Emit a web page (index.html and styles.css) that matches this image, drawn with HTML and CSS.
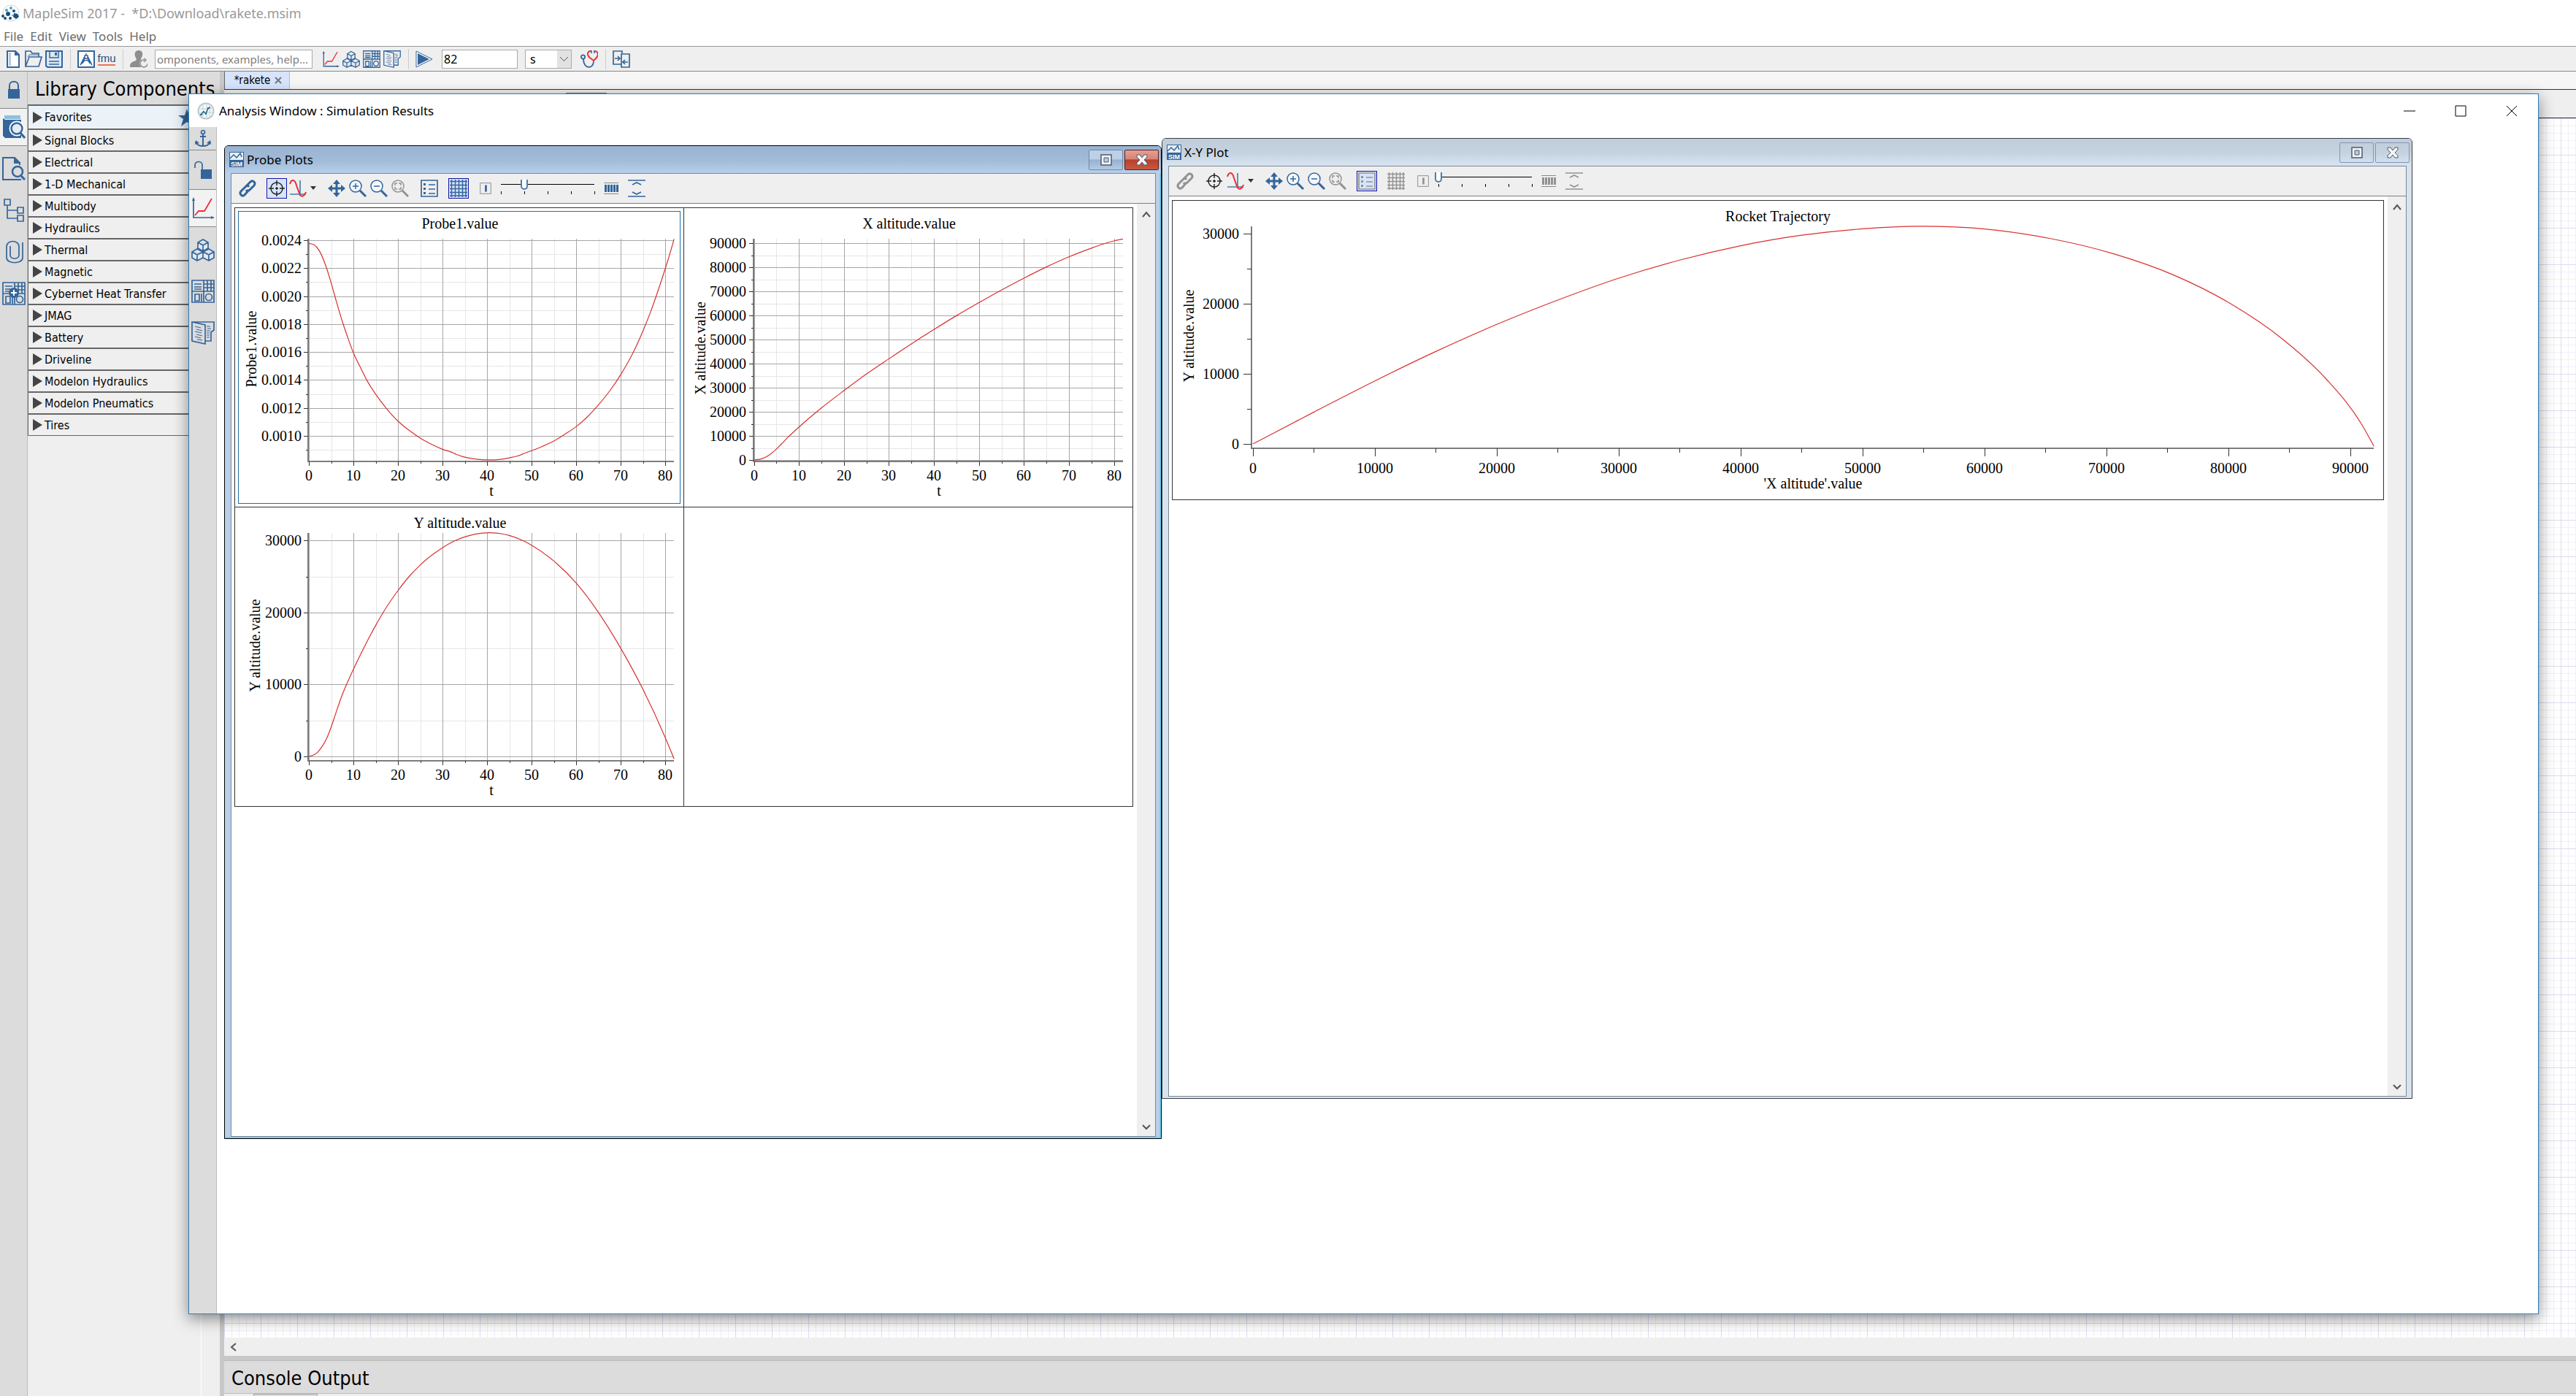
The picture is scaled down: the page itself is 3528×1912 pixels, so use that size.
FILE: index.html
```html
<!DOCTYPE html>
<html lang="en">
<head>
  <meta charset="UTF-8" />
  <title>MapleSim 2017 - *D:\Download\rakete.msim</title>
  <link rel="stylesheet" href="styles.css">
</head>
<body>
  <!-- icon sprite -->
  <svg class="sprite" aria-hidden="true">
    <symbol id="i-app" viewBox="0 0 24 24">
      <circle cx="13" cy="12" r="11" fill="#fff" stroke="#ccd3d8"/>
      <g fill="#15527c"><path d="M17 12l5 1 2 4-4 3-4-3z"/><circle cx="9" cy="13" r="3"/><circle cx="5" cy="19" r="2"/><circle cx="12" cy="19" r="2"/><circle cx="2" cy="16" r="2"/><circle cx="17" cy="9" r="2"/></g>
      <g fill="#4aa0cc"><circle cx="7" cy="8" r="2"/><circle cx="13" cy="5" r="2"/><circle cx="15" cy="15" r="1"/></g>
    </symbol>
    <symbol id="i-analysis" viewBox="0 0 24 24">
      <circle cx="12" cy="12" r="10.5" fill="#f4f7f8" stroke="#c2c6c8" stroke-width="2"/>
      <path d="M8 4v16M13 3v18M17 5v14M4 9h16M3 14h18" stroke="#b5d3df" fill="none"/>
      <path d="M5 17l4-4 3 3 3-8 3-1" stroke="#2a5f80" stroke-width="1.500" fill="none"/>
      <path d="M4 16h3v2H4zM8 12h2v2H8zM11 15h2v2h-2zM14 7h3v2h-3z" fill="#2a6f98"/>
    </symbol>
    <symbol id="i-new" viewBox="0 0 24 24">
      <path d="M4 1h11l5 5v17H4z" fill="#fff" stroke="currentColor" stroke-width="2"/><path d="M6 3h3v18H6z" fill="#b4cbe6"/><path d="M14 1l6 6h-6z" fill="currentColor"/>
    </symbol>
    <symbol id="i-open" viewBox="0 0 24 24">
      <path d="M1 22V1h7l2 3h9v5M1 22L6 9h17l-4 13z" fill="none" stroke="currentColor" stroke-width="1.7"/><path d="M4 9l2-3h12" fill="none" stroke="currentColor"/>
    </symbol>
    <symbol id="i-save" viewBox="0 0 24 24">
      <path d="M1 1h22v22H3l-2-2z" fill="#dce8f4" stroke="currentColor" stroke-width="2"/><path d="M6 1v9h12V1M5 15h14M5 19h14" fill="none" stroke="currentColor" stroke-width="1.5"/><path d="M13 3h3v4h-3z" fill="currentColor"/>
    </symbol>
    <symbol id="i-maplet" viewBox="0 0 24 24">
      <path d="M1 1h22v22H1z" fill="#fff" stroke="currentColor" stroke-width="2"/><path d="M12 4v3M10 8L4 20l6-9M14 8l6 12-6-9M7 18c2-6 8-6 10 0M10 7h4v4h-4z" fill="none" stroke="currentColor" stroke-width="1.4"/>
    </symbol>
    <symbol id="i-user" viewBox="0 0 24 24">
      <path d="M12 0c4 0 6 3 5 7-1 3-2 4-2 6l4 2v8H0c0-6 2-7 8-9 1-1 1-2 0-4-3-5-1-10 4-10z" fill="#8e8e8e"/><circle cx="19" cy="18" r="6" fill="#efefef"/><path d="M20 13a5 5 0 1 0 4 5M19 11l3 2-3 3" fill="none" stroke="#8e8e8e" stroke-width="1.5"/>
    </symbol>
    <symbol id="i-plot" viewBox="0 0 32 32">
      <path d="M3 3v26h26" fill="none" stroke="#34659a" stroke-width="1.7"/><path d="M1 6l2-5 2 5zM27 27l5 2-5 2z" fill="#34659a"/><path d="M5 26l5-6h8L28 3" fill="none" stroke="#e8303a" stroke-width="1.8"/>
    </symbol>
    <symbol id="i-cubes" viewBox="0 0 32 32">
      <path d="M16 2l7 4v8l-7 4-7-4V6zM9 6l7 4 7-4M16 10v8M8 15l8 4v8l-8 4-7-4v-8zM1 19l7 4 8-4M8 23v8M24 15l7 4v8l-7 4-8-4v-8zM16 19l8 4 7-4M24 23v8" fill="#e3e9ef" stroke="currentColor" stroke-width="1.7"/>
    </symbol>
    <symbol id="i-panels" viewBox="0 0 32 32">
      <path d="M1 1h30v30H1zM1 16h30M17 1v30M4 6h10M4 10h10M4 13h10M22 1v15M27 1v15M17 6h14M17 11h14M5 20h6v9H5zM14 19v11" fill="none" stroke="currentColor" stroke-width="1.7"/><circle cx="24" cy="24" r="4.5" fill="none" stroke="currentColor" stroke-width="1.7"/>
    </symbol>
    <symbol id="i-docs" viewBox="0 0 32 32">
      <path d="M1 1h30v11l-4 3v12h-8V5L1 1v26l18 4v-5" fill="none" stroke="currentColor" stroke-width="1.7"/><path d="M5 7l8 2M7 11l8 2M5 14l9 2M7 18l8 2M5 21l8 2M8 25l7 1M21 7h5M22 10h5M21 13h5M21 16h4M21 19h4M21 22h4" stroke="currentColor"/>
    </symbol>
    <symbol id="i-run" viewBox="0 0 24 24">
      <path d="M1 1l22 11L1 23z" fill="#fff" stroke="currentColor"/><path d="M3 4l16 8-16 8z" fill="currentColor"/>
    </symbol>
    <symbol id="i-steth" viewBox="0 0 24 24">
      <circle cx="3.500" cy="9" r="2.600" fill="none" stroke="#34659a" stroke-width="1.8"/><path d="M4 12c0 14 14 14 14 3" fill="none" stroke="#34659a" stroke-width="1.8"/><path d="M15 1c-6-1-7 6-1 10l4 3 3-3c5-5 3-10-2-10" fill="none" stroke="#e8303a" stroke-width="2"/><path d="M15 0v4M19 0v4" stroke="#34659a" stroke-width="1.5"/>
    </symbol>
    <symbol id="i-compare" viewBox="0 0 24 24">
      <path d="M12 19H1V1h12v3M12 5h11v18H12z" fill="none" stroke="currentColor" stroke-width="1.7"/><path d="M3 11h6M7 8l3 3-3 3M21 16h-6M17 13l-3 3 3 3" fill="none" stroke="currentColor" stroke-width="1.7"/>
    </symbol>
    <symbol id="i-lock" viewBox="0 0 32 32">
      <path d="M10 16v-6c0-7 12-7 12 0v6" fill="none" stroke="currentColor" stroke-width="2"/><path d="M8 15h16v13H8z" fill="currentColor"/>
    </symbol>
    <symbol id="i-unlock" viewBox="0 0 32 32">
      <path d="M5 13V9c0-6 10-6 10 0v7" fill="none" stroke="currentColor" stroke-width="1.7"/><path d="M13 15h15v13H13z" fill="currentColor"/>
    </symbol>
    <symbol id="i-book" viewBox="0 0 32 32">
      <path d="M3 0h22v5H3z" fill="#8cc0dc"/><path d="M1 2v26l3 3h22V6H4L1 4z" fill="currentColor"/><circle cx="20" cy="18" r="8" fill="#dfe8f2" stroke="#fff" stroke-width="5"/><circle cx="20" cy="18" r="7.500" fill="#e3ebf4" stroke="currentColor" stroke-width="2.500"/><path d="M25 24l6 7" stroke="currentColor" stroke-width="3"/>
    </symbol>
    <symbol id="i-docsearch" viewBox="0 0 32 32">
      <path d="M12 31H1V1h16l7 7v3M12 31h14" fill="none" stroke="currentColor" stroke-width="2"/><path d="M16 1l8 8h-8z" fill="currentColor"/><circle cx="21" cy="20" r="7" fill="#dcdcdc" stroke="currentColor" stroke-width="2.500"/><path d="M26 26l5 5" stroke="currentColor" stroke-width="3"/>
    </symbol>
    <symbol id="i-tree" viewBox="0 0 32 32">
      <path d="M3 1h8v8H3zM21 12h8v8h-8zM21 23h8v8h-8zM7 9v18h14M7 16h14" fill="none" stroke="currentColor" stroke-width="1.7"/>
    </symbol>
    <symbol id="i-clip" viewBox="0 0 32 32">
      <path d="M28 3v21c0 9-22 9-22 0V9c0-10 17-10 17 0v11c0 7-12 7-12 0V8" fill="none" stroke="currentColor" stroke-width="1.700"/>
    </symbol>
    <symbol id="i-anchor" viewBox="0 0 32 32">
      <circle cx="16" cy="7" r="2.500" fill="none" stroke="currentColor" stroke-width="1.700"/><path d="M16 9v17M12 13h8M6 20c2 8 18 8 20 0" fill="none" stroke="currentColor" stroke-width="2"/><path d="M5 24l1-6 5 4zM27 24l-1-6-5 4z" fill="currentColor"/>
    </symbol>
    <symbol id="i-link" viewBox="0 0 24 24">
      <path d="M10 9l6-6c3-3 8 1 5 5l-6 6c-2 2-4 2-5 0M14 14l-6 7c-3 3-8-1-5-5l6-6c2-2 4-2 5 0" fill="none" stroke="currentColor" stroke-width="3"/>
    </symbol>
    <symbol id="i-cross" viewBox="0 0 24 24">
      <circle cx="12" cy="12" r="8" fill="none" stroke="#222" stroke-width="1.500"/><path d="M12 1v7M12 16v7M1 12h7M16 12h7M10 12h4M12 10v4" stroke="#222" stroke-width="1.500"/>
    </symbol>
    <symbol id="i-sine" viewBox="0 0 24 24">
      <path d="M15 1v21M1 20h22" stroke="#4a7fb0" stroke-width="1.700"/><path d="M1 6c2-7 7-7 9 2l4 11c2 6 7 4 9-2" fill="none" stroke="#e8303a" stroke-width="2"/>
    </symbol>
    <symbol id="i-move" viewBox="0 0 24 24">
      <path d="M12 3v18M3 12h18" stroke="currentColor" stroke-width="3"/><path d="M12 0l5 6H7zM12 24l5-6H7zM0 12l6-5v10zM24 12l-6-5v10z" fill="currentColor"/>
    </symbol>
    <symbol id="i-zoomin" viewBox="0 0 24 24">
      <circle cx="9" cy="9" r="8" fill="#f4f8fc" stroke="currentColor" stroke-width="1.500"/><path d="M5 9h8M9 5v8" stroke="currentColor" stroke-width="1.500"/><path d="M15 15l8 8" stroke="currentColor" stroke-width="3"/>
    </symbol>
    <symbol id="i-zoomout" viewBox="0 0 24 24">
      <circle cx="9" cy="9" r="8" fill="#f4f8fc" stroke="currentColor" stroke-width="1.500"/><path d="M5 9h8" stroke="currentColor" stroke-width="1.500"/><path d="M15 15l8 8" stroke="currentColor" stroke-width="3"/>
    </symbol>
    <symbol id="i-zoomfit" viewBox="0 0 24 24">
      <circle cx="9" cy="9" r="8" fill="none" stroke="currentColor" stroke-width="1.500"/><path d="M5 8V5h3M10 5h3v3M13 10v3h-3M8 13H5v-3" fill="none" stroke="currentColor" stroke-width="1.500"/><path d="M15 15l8 8" stroke="currentColor" stroke-width="3"/>
    </symbol>
    <symbol id="i-list" viewBox="0 0 24 24">
      <path d="M1 1h22v22H1z" fill="none" stroke="currentColor" stroke-width="1.700"/><path d="M4 5h3v3H4zM4 11h3v3H4zM4 17h3v3H4z" fill="currentColor"/><path d="M11 7h9M11 13h9M11 19h9" stroke="currentColor" stroke-width="1.500"/>
    </symbol>
    <symbol id="i-grid" viewBox="0 0 24 24">
      <path d="M2.500 0v24M7.500 0v24M12.500 0v24M17.500 0v24M22 0v24M0 2.500h24M0 7.500h24M0 12.500h24M0 17.500h24M0 22h24" stroke="currentColor" stroke-width="1.500"/>
    </symbol>
    <symbol id="i-one" viewBox="0 0 24 24">
      <path d="M4 4h16v16H4z" fill="none" stroke="#888" stroke-width="1"/><path d="M11 7h3v10h-3z" fill="currentColor"/>
    </symbol>
    <symbol id="i-bars" viewBox="0 0 24 24">
      <path d="M2 4.500h20M2 19.500h20" stroke="#888"/><path d="M3 7h3v10H3zM7 7h3v10H7zM11 7h3v10h-3zM15 7h3v10h-3zM19 7h3v10h-3z" fill="currentColor"/>
    </symbol>
    <symbol id="i-fitv" viewBox="0 0 24 24">
      <path d="M0 1h24M0 23h24M6 7l6-3 6 3M6 17l6 3 6-3" fill="none" stroke="currentColor" stroke-width="1.700"/>
    </symbol>
    <symbol id="i-up" viewBox="0 0 12 12"><path d="M1 9l5-6 5 6" fill="none" stroke="#555" stroke-width="2"/></symbol>
    <symbol id="i-down" viewBox="0 0 12 12"><path d="M1 3l5 5 5-5" fill="none" stroke="#555" stroke-width="2"/></symbol>
    <symbol id="i-left" viewBox="0 0 12 12"><path d="M9 1L3 6l6 5" fill="none" stroke="#555" stroke-width="2"/></symbol>
    <symbol id="i-restore" viewBox="0 0 16 16">
      <path d="M1 1h14v14H1z" fill="#f2f4f7" stroke="#4f5a6b" stroke-width="1.500"/><path d="M5 5h6v6H5z" fill="#b9cbe0" stroke="#4f5a6b"/>
    </symbol>
    <symbol id="i-close" viewBox="0 0 16 16">
      <path d="M1 1h4l3 4 3-4h4v3l-4 4 4 4v3h-4l-3-4-3 4H1v-3l4-4-4-4z" fill="#f2f4f7" stroke="#4f5a6b"/>
    </symbol>
  </svg>

  <header class="titlebar">
    <svg class="app-icon"><use href="#i-app"/></svg>
    <h1>MapleSim 2017 - &nbsp;*D:\Download\rakete.msim</h1>
  </header>

  <nav class="menubar">
    <a href="#">File</a>
    <a href="#">Edit</a>
    <a href="#">View</a>
    <a href="#">Tools</a>
    <a href="#">Help</a>
  </nav>

  <div class="toolbar">
    <div class="group">
      <button aria-label="New"><svg><use href="#i-new"/></svg></button>
      <button aria-label="Open"><svg><use href="#i-open"/></svg></button>
      <button aria-label="Save"><svg><use href="#i-save"/></svg></button>
    </div>
    <div class="group">
      <button aria-label="Template"><svg><use href="#i-maplet"/></svg></button>
      <button class="fmu">fmu</button>
    </div>
    <div class="group">
      <button aria-label="Sign in"><svg><use href="#i-user"/></svg></button>
      <input class="search" type="text" aria-label="Search" placeholder="omponents, examples, help...">
      <button aria-label="Results"><svg><use href="#i-plot"/></svg></button>
      <button aria-label="3-D view"><svg><use href="#i-cubes"/></svg></button>
      <button aria-label="Apps"><svg><use href="#i-panels"/></svg></button>
      <button aria-label="Documents"><svg><use href="#i-docs"/></svg></button>
    </div>
    <div class="group run-group">
      <button aria-label="Run"><svg><use href="#i-run"/></svg></button>
      <input class="duration" type="text" aria-label="Duration" value="82">
      <select class="unit" aria-label="Unit"><option>s</option></select>
      <button aria-label="Diagnostics"><svg><use href="#i-steth"/></svg></button>
    </div>
    <div class="group">
      <button aria-label="Compare"><svg><use href="#i-compare"/></svg></button>
    </div>
  </div>

  <main class="workspace">
    <aside class="rail">
      <button class="rail-lock" aria-label="Lock"><svg><use href="#i-lock"/></svg></button>
      <button class="selected" aria-label="Library"><svg><use href="#i-book"/></svg></button>
      <button aria-label="Local components"><svg><use href="#i-docsearch"/></svg></button>
      <button aria-label="Model tree"><svg><use href="#i-tree"/></svg></button>
      <button aria-label="Attachments"><svg><use href="#i-clip"/></svg></button>
      <button aria-label="Add apps"><svg viewBox="0 0 32 32"><use href="#i-panels"/><circle cx="16" cy="15" r="7" fill="#34659a"/><path d="M12 15h8M16 11v8" stroke="#fff" stroke-width="2"/></svg></button>
    </aside>

    <section class="library">
      <h2>Library Components</h2>
      <ul>
        <li class="favorites"><button>Favorites</button><svg class="star" viewBox="0 0 24 24"><path fill="#34659a" d="M12 0l3 9h9l-7 5 3 10-8-6-8 6 3-10-7-5h9z"/></svg></li>
        <li><button>Signal Blocks</button></li>
        <li><button>Electrical</button></li>
        <li><button>1-D Mechanical</button></li>
        <li><button>Multibody</button></li>
        <li><button>Hydraulics</button></li>
        <li><button>Thermal</button></li>
        <li><button>Magnetic</button></li>
        <li><button>Cybernet Heat Transfer</button></li>
        <li><button>JMAG</button></li>
        <li><button>Battery</button></li>
        <li><button>Driveline</button></li>
        <li><button>Modelon Hydraulics</button></li>
        <li><button>Modelon Pneumatics</button></li>
        <li><button>Tires</button></li>
      </ul>
      <div class="library-rest"></div>
    </section>

    <div class="splitter"></div>

    <section class="editor">
      <div class="tabs">
        <button class="tab">*rakete <svg viewBox="0 0 10 10"><path d="M1 1l8 8M9 1l-8 8" stroke="#777" stroke-width="2"/></svg></button>
      </div>
      <div class="editor-tools"><div class="editor-tool"></div></div>
      <div class="canvas"></div>
      <div class="hscroll"><svg><use href="#i-left"/></svg></div>
      <div class="hsplit"></div>
      <h2>Console Output</h2>
      <div class="console"><div class="console-tab"></div></div>
    </section>
  </main>

  <div class="analysis">
    <div class="analysis-title">
      <svg class="app-icon"><use href="#i-analysis"/></svg>
      <h2>Analysis Window : Simulation Results</h2>
      <div class="win-controls">
        <button aria-label="Minimize"><svg viewBox="0 0 16 16"><path d="M0 8h16" stroke="#000"/></svg></button>
        <button aria-label="Maximize"><svg viewBox="0 0 16 16"><path d="M1 1h14v14H1z" fill="none" stroke="#000"/></svg></button>
        <button aria-label="Close"><svg viewBox="0 0 16 16"><path d="M1 1l14 14M15 1L1 15" stroke="#000"/></svg></button>
      </div>
    </div>
    <div class="analysis-body">
      <aside class="rail">
        <button class="rail-anchor" aria-label="Dock"><svg><use href="#i-anchor"/></svg></button>
        <button class="rail-unlock" aria-label="Unlock"><svg><use href="#i-unlock"/></svg></button>
        <button class="selected" aria-label="Simulation results"><svg><use href="#i-plot"/></svg></button>
        <button aria-label="3-D view"><svg><use href="#i-cubes"/></svg></button>
        <button aria-label="Apps"><svg><use href="#i-panels"/></svg></button>
        <button aria-label="Documents"><svg><use href="#i-docs"/></svg></button>
      </aside>
      <div class="desk">

        <section class="window probe active">
          <div class="window-title">
            <svg class="sim" viewBox="0 0 20 21">
              <path d="M0 0h20v21H0z" fill="#34659a"/><path d="M1 1h18v10H1z" fill="#e8f0f7"/><path d="M1 9l5-5 4 4 5-6 2 5" fill="none" stroke="#34659a" stroke-width="1.5"/><text x="10" y="20" text-anchor="middle">SIM</text>
            </svg>
            <h3>Probe Plots</h3>
            <button aria-label="Restore"><svg><use href="#i-restore"/></svg></button>
            <button class="close" aria-label="Close"><svg><use href="#i-close"/></svg></button>
          </div>
          <div class="window-body">
            <div class="plot-tools">
              <button aria-label="Link axes"><svg><use href="#i-link"/></svg></button>
              <div class="set">
                <button class="on" aria-label="Point probe"><svg><use href="#i-cross"/></svg></button>
                <button aria-label="Curve"><svg><use href="#i-sine"/></svg></button>
                <button class="more" aria-label="More"></button>
              </div>
              <div class="set">
                <button aria-label="Pan"><svg><use href="#i-move"/></svg></button>
                <button aria-label="Zoom in"><svg><use href="#i-zoomin"/></svg></button>
                <button aria-label="Zoom out"><svg><use href="#i-zoomout"/></svg></button>
                <button class="off" aria-label="Zoom to fit"><svg><use href="#i-zoomfit"/></svg></button>
              </div>
              <button aria-label="Legend"><svg><use href="#i-list"/></svg></button>
              <button class="on" aria-label="Grid"><svg><use href="#i-grid"/></svg></button>
              <div class="set columns">
                <button class="one" aria-label="One column"><svg><use href="#i-one"/></svg></button>
                <input type="range" min="0" max="4" value="1" aria-label="Columns">
                <button aria-label="Many columns"><svg><use href="#i-bars"/></svg></button>
                <button class="fitv" aria-label="Fit height"><svg><use href="#i-fitv"/></svg></button>
              </div>
            </div>
            <div class="window-view">
              <div class="plots">
                <div class="cell current"><svg id="plot-probe" class="plot" viewBox="0 0 614 409"></svg></div>
                <div class="cell"><svg id="plot-x" class="plot" viewBox="0 0 614 409"></svg></div>
                <div class="cell"><svg id="plot-y" class="plot" viewBox="0 0 614 409"></svg></div>
                <div class="cell"></div>
              </div>
              <div class="vscroll"><svg><use href="#i-up"/></svg><svg><use href="#i-down"/></svg></div>
            </div>
          </div>
        </section>

        <section class="window xy">
          <div class="window-title">
            <svg class="sim" viewBox="0 0 20 21">
              <path d="M0 0h20v21H0z" fill="#34659a"/><path d="M1 1h18v10H1z" fill="#e8f0f7"/><path d="M1 9l5-5 4 4 5-6 2 5" fill="none" stroke="#34659a" stroke-width="1.5"/><text x="10" y="20" text-anchor="middle">SIM</text>
            </svg>
            <h3>X-Y Plot</h3>
            <button aria-label="Restore"><svg><use href="#i-restore"/></svg></button>
            <button class="close" aria-label="Close"><svg><use href="#i-close"/></svg></button>
          </div>
          <div class="window-body">
            <div class="plot-tools">
              <button class="off" aria-label="Link axes"><svg><use href="#i-link"/></svg></button>
              <div class="set">
                <button aria-label="Point probe"><svg><use href="#i-cross"/></svg></button>
                <button aria-label="Curve"><svg><use href="#i-sine"/></svg></button>
                <button class="more" aria-label="More"></button>
              </div>
              <div class="set">
                <button aria-label="Pan"><svg><use href="#i-move"/></svg></button>
                <button aria-label="Zoom in"><svg><use href="#i-zoomin"/></svg></button>
                <button aria-label="Zoom out"><svg><use href="#i-zoomout"/></svg></button>
                <button class="off" aria-label="Zoom to fit"><svg><use href="#i-zoomfit"/></svg></button>
              </div>
              <button class="on off" aria-label="Legend"><svg><use href="#i-list"/></svg></button>
              <button class="off" aria-label="Grid"><svg><use href="#i-grid"/></svg></button>
              <div class="set columns">
                <button class="one off" aria-label="One column"><svg><use href="#i-one"/></svg></button>
                <input type="range" min="0" max="4" value="0" aria-label="Columns">
                <button class="off" aria-label="Many columns"><svg><use href="#i-bars"/></svg></button>
                <button class="fitv off" aria-label="Fit height"><svg><use href="#i-fitv"/></svg></button>
              </div>
            </div>
            <div class="window-view">
              <div class="plots">
                <div class="cell"><svg id="plot-xy" class="plot" viewBox="0 0 1658 409"></svg></div>
              </div>
              <div class="vscroll"><svg><use href="#i-up"/></svg><svg><use href="#i-down"/></svg></div>
            </div>
          </div>
        </section>

      </div>
    </div>
  </div>

  <script src="plots.js"></script>
</body>
</html>
```

FILE: styles.css
```css
* {
    box-sizing: border-box;
}

body {
    margin: 0;
    height: 100vh;
    display: flex;
    flex-direction: column;
    position: relative;
    overflow: hidden;
    background-color: white;
    color: black;
    font-family: "DejaVu Sans Condensed", "Noto Sans", sans-serif;
    font-size: 16px;
}

h1, h2, h3 {
    margin: 0;
    font-weight: normal;
}

button {
    display: flex;
    align-items: center;
    justify-content: center;
    padding: 0;
    border: none;
    background: none;
    color: #34659a;
    font: inherit;
}

button svg {
    display: block;
    width: 24px;
    height: 24px;
}

.sprite {
    display: none;
}

.app-icon {
    width: 24px;
    height: 24px;
}

/* main window header */
.titlebar {
    display: flex;
    align-items: center;
    gap: 5px;
    height: 36px;
    padding-left: 2px;
    color: #999;
}

.titlebar h1 {
    font-family: "Noto Sans", sans-serif;
    font-size: 18px;
}

.menubar {
    display: flex;
    align-items: center;
    gap: 9px;
    height: 27px;
    padding-left: 5px;
    font-family: "Noto Sans", sans-serif;
    font-size: 17px;
}

.menubar a {
    color: #6b6b6b;
    text-decoration: none;
}

.toolbar {
    display: flex;
    align-items: center;
    height: 35px;
    background-color: #efefef;
    border-top: 1px solid #999;
    border-bottom: 1px solid #888;
    padding-left: 6px;
}

.toolbar .group {
    display: flex;
    align-items: center;
    gap: 4px;
    padding-right: 10px;
    margin-right: 9px;
    border-right: 1px solid #ccc;
    height: 28px;
}

.toolbar .group:last-child {
    border-right: none;
}

.fmu {
    width: 24px;
    height: 18px;
    border-bottom: 2px solid #e8765a;
    color: #1f4e85;
    font-family: "Liberation Sans", sans-serif;
    font-size: 15px;
}

.toolbar input,
.toolbar select {
    height: 26px;
    border: 1px solid #aaa;
    background-color: white;
    font-family: "Noto Sans", sans-serif;
    font-size: 16px;
    color: black;
}

.toolbar .search {
    width: 216px;
    padding: 0 2px;
    margin: 0 9px 0 6px;
    font-size: 15px;
}

.search::placeholder {
    color: #808080;
}

.run-group {
    margin-right: 8px;
}

.duration {
    width: 104px;
    padding: 0 2px;
    margin: 0 6px 0 8px;
}

.toolbar .unit {
    appearance: none;
    width: 64px;
    padding-left: 6px;
    margin-right: 8px;
    border-radius: 0;
    background:
        linear-gradient(45deg, transparent 42%, #555 42%, #555 58%, transparent 58%) 47px 9px / 6px 6px no-repeat,
        linear-gradient(-45deg, transparent 42%, #555 42%, #555 58%, transparent 58%) 52px 9px / 6px 6px no-repeat,
        linear-gradient(to right, white 43px, #e2e2e2 43px);
}

/* workspace */
.workspace {
    flex: 1;
    min-height: 0;
    display: grid;
    grid-template-columns: 38px 263px 6px 1fr;
}

.rail {
    width: 38px;
    background-color: #dcdcdc;
    border-right: 1px solid #bbb;
}

.rail button {
    width: 100%;
    height: 57px;
}

.rail button svg {
    width: 32px;
    height: 32px;
}

.rail .rail-lock {
    height: 50px;
}

.rail .rail-anchor {
    height: 32px;
    border-bottom: 1px solid #888;
}

.rail .rail-unlock {
    height: 53px;
}

.rail .selected {
    height: 52px;
    margin-bottom: 2px;
    background-color: #f2f2f2;
    border-top: 1px solid #888;
    border-bottom: 1px solid #888;
}

.workspace h2 {
    background-color: #dcdcdc;
    font-size: 27px;
    line-height: 47px;
    white-space: nowrap;
}

.library {
    display: flex;
    flex-direction: column;
    background-color: #efefef;
}

.library h2 {
    height: 45px;
    padding-left: 10px;
}

.library ul {
    list-style: none;
    margin: 0;
    padding: 0;
    width: 237px;
    border-left: 1px solid #666;
    border-bottom: 1px solid #666;
}

.library li {
    display: flex;
    align-items: center;
    height: 30px;
    padding: 0 7px 0 6px;
    border-top: 2px solid #666;
}

.library li.favorites {
    height: 33px;
    background-color: #ebf3f8;
}

.library li button {
    flex: 1;
    justify-content: flex-start;
    gap: 3px;
    color: black;
}

.library li button::before {
    content: "";
    border-left: 13px solid #444;
    border-top: 8px solid transparent;
    border-bottom: 8px solid transparent;
}

.star {
    width: 24px;
    height: 24px;
}

.library-rest {
    flex: 1;
    width: 238px;
    border-right: 1px solid white;
}

.splitter,
.hsplit {
    background-color: #c8c8c8;
}

.editor {
    display: flex;
    flex-direction: column;
    min-width: 0;
}

.tabs {
    height: 25px;
    background-color: #f6f6f6;
    border-bottom: 1px solid #333;
}

.tab {
    width: 90px;
    height: 24px;
    gap: 6px;
    padding-left: 3px;
    background-color: #d6e4fc;
    border-left: 1px solid #666;
    border-right: 1px solid #bbb;
    color: black;
    font-size: 15px;
}

.tab svg {
    width: 10px;
    height: 10px;
}

.editor-tools {
    height: 39px;
    padding: 4px 0 0 468px;
    background-color: #efefef;
    border-bottom: 1px solid #333;
}

.editor-tool {
    width: 56px;
    height: 28px;
    border: 1px solid #777;
}

.canvas {
    flex: 1;
    background-color: white;
    background-image:
        linear-gradient(to right, #dcdcf0 1px, transparent 1px),
        linear-gradient(to bottom, #dcdcf0 1px, transparent 1px),
        linear-gradient(to right, #f0f0f9 1px, transparent 1px),
        linear-gradient(to bottom, #f0f0f9 1px, transparent 1px);
    background-size: 50px 50px, 50px 50px, 10px 10px, 10px 10px;
}

.hscroll {
    display: flex;
    align-items: center;
    height: 25px;
    padding-left: 7px;
    background-color: #efefef;
}

.hscroll svg,
.vscroll svg {
    width: 12px;
    height: 12px;
}

.hsplit {
    height: 6px;
}

.editor h2 {
    height: 46px;
    padding-left: 10px;
    border-top: 1px solid #bbb;
    border-bottom: 1px solid #bbb;
}

.console {
    height: 3px;
    padding-left: 40px;
    background-color: #efefef;
}

.console-tab {
    width: 88px;
    height: 3px;
    background-color: #dcdcdc;
    border: 1px solid #aaa;
    border-bottom: none;
}

/* analysis window floats over the workspace */
.analysis {
    position: absolute;
    top: 128px;
    left: 258px;
    right: 51px;
    bottom: 112px;
    display: flex;
    flex-direction: column;
    background-color: white;
    border: 1px solid #2f7cb5;
    box-shadow: 0 6px 20px rgba(0,0,0,0.45);
}

.analysis-title {
    display: flex;
    align-items: center;
    gap: 6px;
    height: 45px;
    padding: 0 28px 0 11px;
}

.analysis-title h2 {
    flex: 1;
    font-family: "Noto Sans", sans-serif;
    font-size: 17px;
}

.win-controls {
    display: flex;
    gap: 54px;
}

.win-controls svg {
    width: 16px;
    height: 16px;
}

.analysis-body {
    flex: 1;
    min-height: 0;
    display: flex;
}

.desk {
    flex: 1;
    position: relative;
    overflow: hidden;
}

.window {
    position: absolute;
    display: flex;
    flex-direction: column;
    background-color: #d8e3f0;
    border: 1px solid #3a3f48;
    border-radius: 6px 6px 0 0;
    overflow: hidden;
}

.probe {
    left: 10px;
    top: 25px;
    width: 1284px;
    height: 1361px;
}

.xy {
    left: 1294px;
    top: 15px;
    width: 1713px;
    height: 1316px;
}

.window.active {
    background-color: #b9cfe9;
    border-color: black;
    box-shadow: inset -2px -2px 0 #6fd0ee;
}

.window-title {
    display: flex;
    align-items: center;
    height: 37px;
    padding: 0 3px 0 6px;
    background: linear-gradient(#c0ccda, #c4d2e0 50%, #d8e4f1);
}

.active .window-title {
    background: linear-gradient(#9ab3d0, #a0bad7 50%, #b7cfea);
}

.window-title h3 {
    flex: 1;
    padding-left: 4px;
    font-family: "Noto Sans", sans-serif;
    font-size: 17px;
}

.sim {
    width: 20px;
    height: 21px;
    fill: white;
    font-family: "Liberation Sans", sans-serif;
    font-size: 9px;
    font-weight: bold;
}

.window-title button {
    width: 47px;
    height: 28px;
    margin-left: 2px;
    border: 1px solid #8296b4;
    border-radius: 2px;
}

.active .window-title button {
    border-color: #6f86a8;
    background: linear-gradient(#bdd0e6 45%, #98b1d0 50%, #b5cae3);
}

.active .window-title .close {
    border-color: #5c1f1c;
    background: linear-gradient(#e3a092, #d88474 45%, #b8402c 50%, #c9593f);
}

.window-title button svg {
    width: 16px;
    height: 16px;
}

.window-body {
    flex: 1;
    min-height: 0;
    display: flex;
    flex-direction: column;
    margin: 0 7px 2px 8px;
    border: 1px solid #7d8794;
    background-color: white;
}

.plot-tools {
    display: flex;
    align-items: center;
    gap: 12px;
    height: 41px;
    padding: 0 8px 1px;
    background-color: #efefef;
    border-bottom: 1px solid #7f7f7f;
}

.set {
    display: flex;
    align-items: center;
    gap: 1px;
}

.plot-tools button {
    width: 28px;
    height: 28px;
}

.plot-tools .on {
    background-color: #d6e4fc;
    border: 1px solid #1212a8;
}

.plot-tools .off {
    color: #929292;
}

.plot-tools .more {
    width: 12px;
}

.more::before {
    content: "";
    border-top: 5px solid #333;
    border-left: 4px solid transparent;
    border-right: 4px solid transparent;
}

.columns {
    gap: 0;
}

.plot-tools .one {
    width: 22px;
}

.plot-tools .fitv {
    margin-left: 7px;
}

.columns input {
    appearance: none;
    width: 138px;
    height: 28px;
    margin: 0 4px 0 5px;
    background:
        repeating-linear-gradient(to right, black 0, black 1px, transparent 1px, transparent 32px) 5px 18px / 129px 4px no-repeat,
        linear-gradient(black, black) 5px 8px / 128px 1px no-repeat;
}

.columns input::-webkit-slider-thumb {
    appearance: none;
    width: 10px;
    height: 14px;
    margin-bottom: 9px;
    background-color: white;
    border: 2px solid #4a7fb0;
    border-top: none;
    border-radius: 0 0 5px 5px;
}

.window-view {
    flex: 1;
    min-height: 0;
    display: flex;
    align-items: stretch;
}

.plots {
    flex: 1;
    align-self: flex-start;
    display: grid;
    grid-template-columns: 1fr;
    gap: 1px;
    margin: 5px 5px 0 4px;
    background-color: #333;
    border: 1px solid #333;
}

.probe .plots {
    grid-template-columns: 1fr 1fr;
}

.cell {
    background-color: white;
}

.current {
    outline: 1px solid #1f6fa8;
    outline-offset: -5px;
}

.vscroll {
    display: flex;
    flex-direction: column;
    justify-content: space-between;
    align-items: center;
    width: 25px;
    padding: 9px 0 6px;
    background-color: #efefef;
}

/* plots */
.plot {
    display: block;
    width: 100%;
    font-family: "Liberation Serif", serif;
    font-size: 20px;
}

.plot line {
    shape-rendering: crispEdges;
}

.grid-major {
    stroke: #a6a6a6;
    stroke-width: 1;
}

.grid-minor {
    stroke: #e6e6e6;
    stroke-width: 1;
}

.axis {
    stroke: #7d7d7d;
    stroke-width: 2;
}

.tick {
    stroke: #333;
    stroke-width: 1;
}

.curve {
    fill: none;
    stroke: #d93030;
    stroke-width: 1.2;
}
```

FILE: plots.js
```js
const NS = 'http://www.w3.org/2000/svg';

const probe1 = [
  [0, 2.377], [1, 2.370], [1.83, 2.348], [2.78, 2.299], [3.95, 2.203], [5.05, 2.09], [6.2, 1.959], [7.5, 1.82],
  [8.6, 1.716], [10, 1.594], [11.6, 1.489], [13, 1.399], [15, 1.298], [17.4, 1.197], [20, 1.106], [22.5, 1.04],
  [25, 0.984], [27.7, 0.937], [30, 0.904], [32.6, 0.876], [33, 0.869], [35, 0.848], [37.6, 0.833], [40.3, 0.828],
  [42.7, 0.831], [45, 0.843], [47.6, 0.864], [48.2, 0.873], [50, 0.894], [52.6, 0.927], [55, 0.963], [57.5, 1.012],
  [60, 1.066], [62.4, 1.132], [65, 1.221], [67.6, 1.324], [70, 1.437], [72.9, 1.602], [75, 1.75], [76.7, 1.885],
  [78.2, 2.02], [80, 2.195], [81.1, 2.308], [82, 2.408]
];

const xAltitude = [
  [0, 0], [1.6, 400], [3.35, 2000], [5, 4500], [6.1, 6600], [7.6, 9500], [10, 13650], [15, 21600], [20, 28800],
  [25, 35700], [30, 42050], [35, 48250], [40, 54200], [45, 59950], [50, 65350], [55, 70600], [60, 75550],
  [65, 80200], [70, 84400], [75, 88000], [77.6, 89700], [80, 91000], [82, 91820]
];

const yAltitude = [
  [0, 0], [1, 170], [2, 600], [3, 1400], [4, 2500], [5, 4060], [6.1, 6100], [7.3, 8250], [10, 12100],
  [12.4, 15150], [15, 18200], [16.9, 20220], [20, 23030], [22.6, 25060], [25, 26600], [30, 29000], [33, 30030],
  [35, 30500], [37.5, 30900], [40.5, 31080], [43.5, 30920], [45, 30700], [48, 30000], [50, 29350], [55, 27150],
  [60, 24100], [65, 20020], [70, 15050], [75, 9330], [80, 2640], [82, -340]
];

const trajectory = [
  [0, 0], [5000, 4550], [10000, 9000], [15000, 13200], [20000, 17070], [25000, 20540], [30000, 23670],
  [35000, 26250], [40000, 28300], [45000, 29800], [50000, 30720], [54700, 31080], [60000, 30700], [65350, 29350],
  [70600, 27150], [75550, 24100], [80200, 20020], [84400, 15050], [88000, 9330], [91000, 2640], [91950, -340]
];

function add(svg, name, attrs, text) {
  const el = document.createElementNS(NS, name);
  for (const key in attrs) el.setAttribute(key, attrs[key]);
  if (text !== undefined) el.textContent = text;
  svg.appendChild(el);
}

function line(svg, cls, x1, y1, x2, y2) {
  add(svg, 'line', { class: cls, x1: x1, y1: y1, x2: x2, y2: y2 });
}

// smooth path through points that are sorted by x
function curve(points) {
  const n = points.length;
  const secant = i => (points[i + 1][1] - points[i][1]) / (points[i + 1][0] - points[i][0]);
  const slopes = points.map((p, i) => {
    if (i === 0) return secant(0);
    if (i === n - 1) return secant(n - 2);
    const h0 = p[0] - points[i - 1][0];
    const h1 = points[i + 1][0] - p[0];
    return (secant(i - 1) * h1 + secant(i) * h0) / (h0 + h1);
  });
  let d = 'M' + points[0];
  for (let i = 0; i < n - 1; i++) {
    const p = points[i], q = points[i + 1];
    const h = (q[0] - p[0]) / 3;
    d += 'C' + [p[0] + h, p[1] + slopes[i] * h] + ' ' + [q[0] - h, q[1] - slopes[i + 1] * h] + ' ' + q;
  }
  return d;
}

// x and y: { zero, unit, step, max, min } with unit = pixels per value
function drawPlot(id, o) {
  const svg = document.getElementById(id);
  const px = v => o.x.zero + v * o.x.unit;
  const py = v => o.y.zero - v * o.y.unit;
  const long = o.tick, short = Math.round(o.tick / 2);

  const xs = [], ys = [];
  for (let i = 0; i * o.x.step / 2 <= o.x.max; i++) xs.push([i * o.x.step / 2, i % 2 === 0]);
  for (let i = Math.ceil(o.y.min * 2 / o.y.step); i * o.y.step / 2 <= o.y.max + 1e-9; i++) ys.push([i * o.y.step / 2, i % 2 === 0]);

  if (o.grid) {
    for (const major of [false, true]) {
      const cls = major ? 'grid-major' : 'grid-minor';
      xs.filter(t => t[1] === major).forEach(t => line(svg, cls, Math.round(px(t[0])), o.top, Math.round(px(t[0])), o.bottom));
      ys.filter(t => t[1] === major).forEach(t => line(svg, cls, o.left, Math.round(py(t[0])), o.right, Math.round(py(t[0]))));
    }
  }

  line(svg, 'axis', o.left, o.top, o.left, o.bottom + 1);
  line(svg, 'axis', o.left - 1, o.bottom, o.right, o.bottom);

  xs.forEach(t => {
    const x = Math.round(px(t[0]));
    line(svg, 'tick', x, o.bottom, x, o.bottom + (t[1] ? long : short));
    if (t[1]) add(svg, 'text', { x: x, y: 373, 'text-anchor': 'middle' }, t[0]);
  });
  ys.forEach(t => {
    const y = Math.round(py(t[0]));
    line(svg, 'tick', o.left - (t[1] ? long : short), y, o.left, y);
    if (t[1]) add(svg, 'text', { x: o.labelEnd, y: y + 7, 'text-anchor': 'end' }, o.format ? o.format(t[0]) : t[0]);
  });

  add(svg, 'path', { class: 'curve', d: curve(o.data.map(p => [px(p[0]), py(p[1])])) });

  add(svg, 'text', { x: o.titleX, y: 28, 'text-anchor': 'middle' }, o.title);
  add(svg, 'text', { x: o.xLabelX, y: 394, 'text-anchor': 'middle' }, o.xLabel);
  add(svg, 'text', { transform: 'translate(' + o.yLabelAt + ') rotate(-90)', 'text-anchor': 'middle' }, o.yLabel);
}

drawPlot('plot-probe', {
  data: probe1, grid: true, tick: 6,
  left: 100, right: 601, top: 42, bottom: 347, labelEnd: 91,
  x: { zero: 101, unit: 6.1, step: 10, max: 82 },
  y: { zero: 503.4, unit: 191.4, step: 0.2, min: 0.83, max: 2.4 },
  format: v => (v / 1000).toFixed(4),
  title: 'Probe1.value', titleX: 308, xLabel: 't', xLabelX: 351,
  yLabel: 'Probe1.value', yLabelAt: '29 193'
});

drawPlot('plot-x', {
  data: xAltitude, grid: true, tick: 6,
  left: 95, right: 601, top: 42, bottom: 347, labelEnd: 85,
  x: { zero: 95.5, unit: 6.164, step: 10, max: 82 },
  y: { zero: 345, unit: 0.0032967, step: 10000, min: 0, max: 91000 },
  title: 'X altitude.value', titleX: 308, xLabel: 't', xLabelX: 349,
  yLabel: 'X altitude.value', yLabelAt: '29 192'
});

drawPlot('plot-y', {
  data: yAltitude, grid: true, tick: 6,
  left: 100, right: 601, top: 35, bottom: 347, labelEnd: 91,
  x: { zero: 101, unit: 6.1, step: 10, max: 82 },
  y: { zero: 341, unit: 0.0098567, step: 10000, min: 0, max: 31000 },
  title: 'Y altitude.value', titleX: 308, xLabel: 't', xLabelX: 351,
  yLabel: 'Y altitude.value', yLabelAt: '34 189'
});

drawPlot('plot-xy', {
  data: trajectory, grid: false, tick: 11,
  left: 108, right: 1645, top: 35, bottom: 339, labelEnd: 91,
  x: { zero: 110, unit: 0.016697, step: 10000, max: 91900 },
  y: { zero: 333, unit: 0.00959, step: 10000, min: 0, max: 31000 },
  title: 'Rocket Trajectory', titleX: 829, xLabel: "'X altitude'.value", xLabelX: 877,
  yLabel: 'Y altitude.value', yLabelAt: '29 185'
});
```
